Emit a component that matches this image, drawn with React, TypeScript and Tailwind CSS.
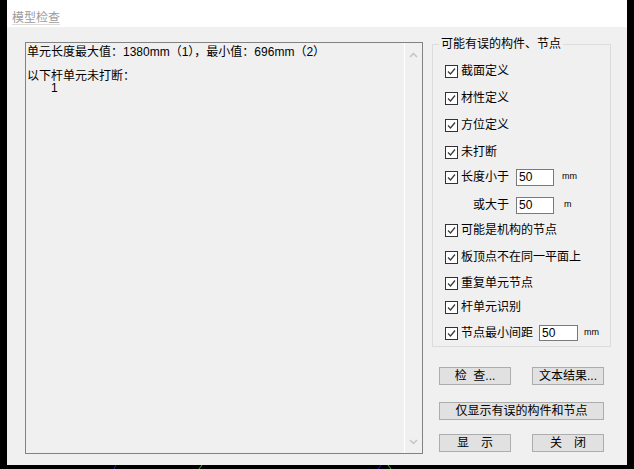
import React from "react";

const rows = [
  { label: "截面定义", mt: "mt-0" },
  { label: "材性定义", mt: "mt-[7px]" },
  { label: "方位定义", mt: "mt-[7px]" },
  { label: "未打断", mt: "mt-[7px]" },
];

const rowsAfter = [
  { label: "可能是机构的节点", mt: "mt-[5px]" },
  { label: "板顶点不在同一平面上", mt: "mt-[7px]" },
  { label: "重复单元节点", mt: "mt-[6px]" },
  { label: "杆单元识别", mt: "mt-[4px]" },
];

const CheckBox: React.FC = () => (
  <span className="w-[13px] h-[13px] border border-[#333333] bg-white flex items-center justify-center shrink-0">
    <svg width="9" height="9" viewBox="0 0 9 9">
      <path d="M1 4.5 L3.5 7 L8 1.5" fill="none" stroke="#3c3c3c" strokeWidth="1.3" />
    </svg>
  </span>
);

const Field: React.FC<{ w: string; h: string }> = ({ w, h }) => (
  <span className={`${w} ${h} bg-white border border-[#7a7a7a] flex items-center pl-[2px] text-[12px] leading-none`}>
    50
  </span>
);

const Button: React.FC<{ children: React.ReactNode; wide?: boolean }> = ({ children, wide }) => (
  <div
    className={`${wide ? "w-[165px]" : "w-[72px]"} h-[18px] bg-[#e1e1e1] border border-[#adadad] flex items-center justify-center text-[12px] leading-none whitespace-pre text-black`}
  >
    {children}
  </div>
);

export default function App() {
  return (
    <div className="w-[634px] h-[469px] bg-black flex flex-col overflow-hidden font-['Liberation_Sans','Noto_Sans_CJK_SC',sans-serif] text-black">
      <div className="flex h-[465px] px-[7px]">
        <div className="w-[620px] flex flex-col">
          {/* title bar */}
          <div className="h-[27px] bg-white pl-[5px] pt-[5px]">
            <span className="text-[12px] leading-[14px] text-[#9c9c9c] underline decoration-[#dcdcdc] underline-offset-2">
              模型检查
            </span>
          </div>

          {/* body */}
          <div className="flex-1 bg-[#f0f0f0] flex pl-[18px] pt-[15px]">
            {/* text output */}
            <div className="w-[398px] h-[412px] border border-[#828282] flex">
              <div className="flex-1 pl-[1px] pt-[3px] text-[12px] leading-[12px]">
                <div>单元长度最大值：1380mm（1），最小值：696mm（2）</div>
                <div className="h-[12px]" />
                <div className="leading-[12px]">以下杆单元未打断：</div>
                <div className="pl-[24px] pt-[1px] leading-[10px]">1</div>
              </div>
              <div className="w-[18px] border-l border-white flex flex-col items-center justify-between pt-[9px] pb-[8px]">
                <svg width="9" height="6" viewBox="0 0 9 6">
                  <path d="M1 5 L4.5 1.5 L8 5" fill="none" stroke="#c4c4c4" strokeWidth="1.5" />
                </svg>
                <svg width="9" height="6" viewBox="0 0 9 6">
                  <path d="M1 1 L4.5 4.5 L8 1" fill="none" stroke="#c4c4c4" strokeWidth="1.5" />
                </svg>
              </div>
            </div>

            {/* right column */}
            <div className="ml-[9px] w-[179px] flex flex-col">
              <div className="mt-[2px] h-[303px] border border-[#dcdcdc] relative pt-[16px] text-[12px]">
                <span className="absolute -top-[9px] left-[6px] px-[2px] bg-[#f0f0f0] leading-[16px]">
                  可能有误的构件、节点
                </span>
                {rows.map((r) => (
                  <div key={r.label} className={`${r.mt} h-[20px] flex items-center pl-[12px]`}>
                    <CheckBox />
                    <span className="ml-[3px]">{r.label}</span>
                  </div>
                ))}
                <div className="mt-[5px] h-[20px] flex items-center pl-[12px]">
                  <CheckBox />
                  <span className="ml-[3px] w-[55px]">长度小于</span>
                  <Field w="w-[38px]" h="h-[17px]" />
                  <span className="ml-[8px] text-[9px]">mm</span>
                </div>
                <div className="mt-[8px] h-[20px] flex items-center pl-[40px]">
                  <span className="w-[43px]">或大于</span>
                  <Field w="w-[38px]" h="h-[17px]" />
                  <span className="ml-[10px] text-[9px]">m</span>
                </div>
                {rowsAfter.map((r) => (
                  <div key={r.label} className={`${r.mt} h-[20px] flex items-center pl-[12px]`}>
                    <CheckBox />
                    <span className="ml-[3px]">{r.label}</span>
                  </div>
                ))}
                <div className="mt-[6px] h-[20px] flex items-center pl-[12px]">
                  <CheckBox />
                  <span className="ml-[3px] w-[78px]">节点最小间距</span>
                  <Field w="w-[39px]" h="h-[16px]" />
                  <span className="ml-[6px] text-[9px]">mm</span>
                </div>
              </div>

              <div className="mt-[20px] pl-[7px] flex gap-[21px]">
                <Button>{"检  查..."}</Button>
                <Button>文本结果...</Button>
              </div>
              <div className="mt-[17px] pl-[7px] flex">
                <Button wide>仅显示有误的构件和节点</Button>
              </div>
              <div className="mt-[14px] pl-[7px] flex gap-[21px]">
                <Button>{"显　示"}</Button>
                <Button>{"关　闭"}</Button>
              </div>
            </div>
          </div>
        </div>
      </div>

      {/* drawing canvas showing below the dialog */}
      <div className="h-[4px]">
        <svg width="634" height="4" viewBox="0 0 634 4">
          <line x1="114" y1="4" x2="116" y2="0" stroke="#2020c0" strokeWidth="1" />
          <line x1="199" y1="4" x2="202" y2="0" stroke="#20c020" strokeWidth="1" />
          <line x1="378" y1="4" x2="381" y2="0" stroke="#2020c0" strokeWidth="1" />
          <line x1="388" y1="0" x2="391" y2="4" stroke="#20c020" strokeWidth="1" />
        </svg>
      </div>
    </div>
  );
}
